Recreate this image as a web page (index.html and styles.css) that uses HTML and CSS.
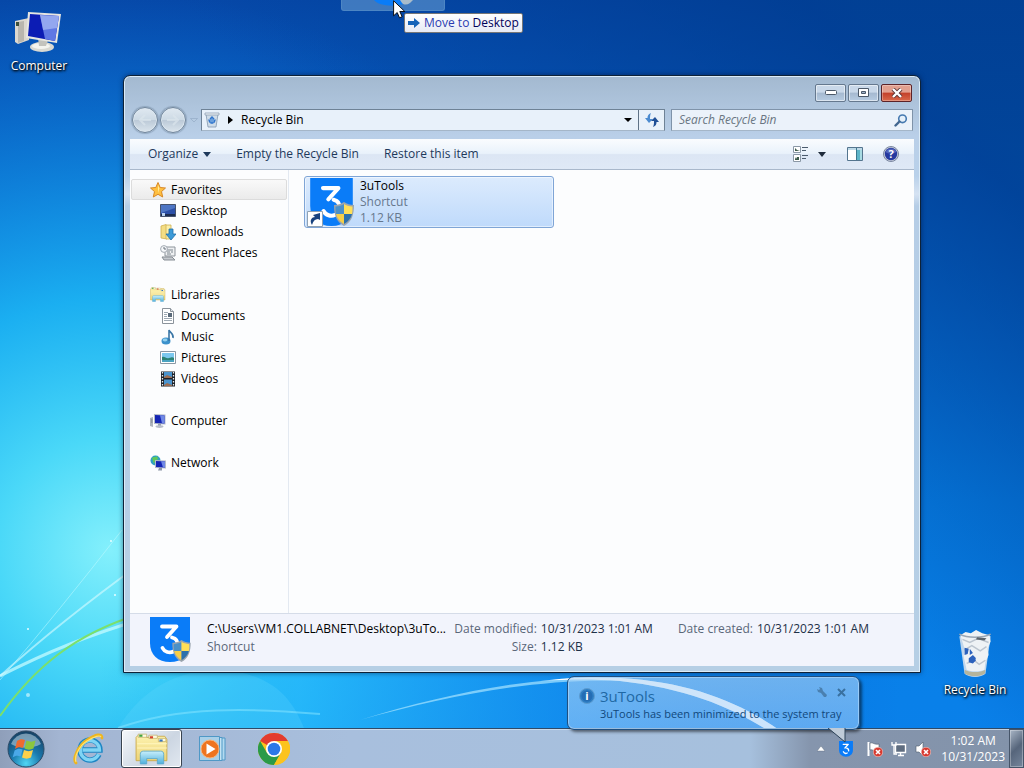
FILE: index.html
```html
<!DOCTYPE html>
<html lang="en">
<head>
    <meta charset="UTF-8">
    <meta name="viewport" content="width=device-width, initial-scale=1.0">
    <title>Recycle Bin</title>
    <link rel="stylesheet" href="styles.css">
</head>
<body>
    <!-- Shared icons -->
    <svg class="sprite" aria-hidden="true">
        <defs>
            <linearGradient id="screen" x1="0" y1="0" x2="1" y2="1">
                <stop offset="0" stop-color="#1a3ad0"/>
                <stop offset="0.4" stop-color="#0a1fb0"/>
                <stop offset="0.45" stop-color="#6f8fe8"/>
                <stop offset="1" stop-color="#3050d8"/>
            </linearGradient>
            <linearGradient id="folder" x1="0" y1="0" x2="0" y2="1">
                <stop offset="0" stop-color="#fdf3b0"/>
                <stop offset="1" stop-color="#ecd377"/>
            </linearGradient>
            <linearGradient id="aqua" x1="0" y1="0" x2="0" y2="1">
                <stop offset="0" stop-color="#c8effc"/>
                <stop offset="1" stop-color="#4fb0dc"/>
            </linearGradient>
        </defs>
        <symbol id="shield" viewBox="0 0 20 24">
            <path d="M10 0c3 2 6 3 10 3c0 9-2 17-10 21C2 20 0 12 0 3c4 0 7-1 10-3z" fill="#9aa4ae"/>
            <path d="M10 2v10H2C1.400 9 1.500 7 1.500 4.500C5 4.300 8 3.500 10 2z" fill="#4a90c8"/>
            <path d="M10 2v10h8c.6-3 .5-5 .5-7.500C15 4.300 12 3.500 10 2z" fill="#ffdf58"/>
            <path d="M10 12v10C5.500 19.500 3 16 2 12z" fill="#f6cf48"/>
            <path d="M10 12v10c4.500-2.500 7-6 8-10z" fill="#2c70ac"/>
        </symbol>
        <symbol id="logo-3u" viewBox="0 0 40 46">
            <path d="M0 0h40v26c0 12-8 19-20 19S0 38 0 26z" fill="#0a7cf8"/>
            <path d="M12 9.500h14.500L17 20" fill="none" stroke="#fff" stroke-width="3.800" stroke-linecap="round" stroke-linejoin="round"/>
            <path d="M22 20.500c4 1 6 4 5.500 8M12.500 31c2 4 7 5.500 11 3.500" fill="none" stroke="#fff" stroke-width="3.800" stroke-linecap="round"/>
        </symbol>
        <symbol id="pc" viewBox="0 0 16 16">
            <path d="M0 5l3-1v10l-3-1z" fill="#aeb4bc"/>
            <path d="M1 7h1.500M1 9h1.500" stroke="#6d757e" stroke-width="0.800"/>
            <path d="M4 1l11.500.5v10l-11.500-.5z" fill="#b3bac8"/>
            <path d="M5 2l9.500.5v8l-9.500-.5z" fill="#1424b4"/>
            <path d="M10 2.300l4.500.2v8l-2.500-.2z" fill="#6f88e6"/>
            <path d="M8 11h3v2H8z" fill="#9aa2ae"/>
            <ellipse cx="9.500" cy="13.600" rx="4" ry="1.300" fill="#b7bdc8"/>
        </symbol>
        <symbol id="bin" viewBox="0 0 36 46">
            <path d="M3 6l5 36c4 4 16 4 20 0l5-36z" fill="#dfe6ee" fill-opacity="0.850"/>
            <path d="M4 5l5-3 5 1 5-3 6 3 7 2 1 6-3 7 1 6-3 7-1 7c-5 2-12 2-17 0l-3-13 1-7z" fill="#eef2f5"/>
            <path d="M6 9l7 3 8-4 10 4M8 19l7-4 8 5 6-4M10 32l7-3 5 4 6-4" fill="none" stroke="#bcc5cf" stroke-width="1.400"/>
            <path d="M3 4c8 4 22 4 30 0" fill="none" stroke="#9aa6b4" stroke-width="1.400"/>
            <path d="M20 7l9 1-2 2-8-1z" fill="#5c646b"/>
            <path d="M8 17l4 1-1 5-3 1zM13 18l3 4-3 2zM12 27l4-3 3 5-3 3-4-1zM16 24l3 3-2 2z" fill="#2c62bd"/>
            <path d="M8 38c5 3 15 3 20 0l-.6 4c-5 3-14 3-19 0z" fill="#b5b49c"/>
        </symbol>
        <symbol id="library" viewBox="0 0 32 30">
            <path d="M1 4l2-2h6l2 2h10l1-1h6l2 3v20H1z" fill="url(#folder)" stroke="#c9a743" stroke-width="0.800"/>
            <path d="M3 1h8v3H3zM13 2h8v3h-8zM22 5h7v3h-7z" fill="#fffbe0" stroke="#b9a55a" stroke-width="0.600"/>
            <path d="M4 1.500h3v2H4z" fill="#3fa33f"/>
            <path d="M14 3h3v2h-3z" fill="#d5442b"/>
            <path d="M23 6h3v2h-3z" fill="#3673bd"/>
            <path d="M2 10h28M2 14h28" stroke="#fff6c0"/>
            <path d="M5 29v-9c0-2 1-3 3-3h16c2 0 3 1 3 3v9h-6v-5H11v5z" fill="url(#aqua)" stroke="#5aa9cf" stroke-width="0.800"/>
        </symbol>
        <symbol id="badge-x" viewBox="0 0 10 10">
            <circle cx="5" cy="5" r="4.800" fill="#d83a30" stroke="#f7d5d0" stroke-width="0.600"/>
            <path d="M3 3l4 4M7 3l-4 4" stroke="#fff" stroke-width="1.600"/>
        </symbol>
    </svg>

    <!-- Wallpaper -->
    <svg class="wallpaper" viewBox="0 0 1024 768" preserveAspectRatio="xMidYMid slice" aria-hidden="true">
        <defs>
            <linearGradient id="sky" x1="0" y1="0" x2="0" y2="1">
                <stop offset="0" stop-color="#0648a8"/>
                <stop offset="0.300" stop-color="#0668cc"/>
                <stop offset="0.650" stop-color="#0680e6"/>
                <stop offset="1" stop-color="#0a80ea"/>
            </linearGradient>
            <radialGradient id="glow" gradientUnits="userSpaceOnUse" cx="110" cy="550" r="560">
                <stop offset="0" stop-color="#84f0fc"/>
                <stop offset="0.200" stop-color="#4ad8f8"/>
                <stop offset="0.450" stop-color="#1db6f4" stop-opacity="0.900"/>
                <stop offset="1" stop-color="#0a70dc" stop-opacity="0"/>
            </radialGradient>
            <linearGradient id="shade" x1="0.400" y1="0.700" x2="1" y2="0.200">
                <stop offset="0.350" stop-color="#003c94" stop-opacity="0"/>
                <stop offset="0.950" stop-color="#003c90" stop-opacity="0.800"/>
                <stop offset="1" stop-color="#003e90" stop-opacity="0.800"/>
            </linearGradient>
            <linearGradient id="floor" x1="0" y1="0" x2="1" y2="0">
                <stop offset="0" stop-color="#18baf4" stop-opacity="0"/>
                <stop offset="0.250" stop-color="#28b8fc"/>
                <stop offset="0.600" stop-color="#1490f0"/>
                <stop offset="1" stop-color="#0464d4" stop-opacity="0"/>
            </linearGradient>
        </defs>
        <rect width="1024" height="768" fill="url(#sky)"/>
        <rect width="1024" height="768" fill="url(#glow)"/>
        <rect width="1024" height="768" fill="url(#shade)"/>
        <rect x="100" y="660" width="800" height="108" fill="url(#floor)" opacity="0.700"/>
        <path d="M118 728c30-50 80-64 120-56s55 30 66 56z" fill="#6fdcff" opacity="0.220"/>
        <path d="M0 676Q70 640 140 620" fill="none" stroke="#c6fbff" stroke-width="3" opacity="0.750"/>
        <path d="M0 676Q60 622 140 564" fill="none" stroke="#d8fcff" stroke-width="2" opacity="0.600"/>
        <path d="M0 680Q60 610 122 530" fill="none" stroke="#c6fbff" opacity="0.500"/>
        <path d="M0 716C34 668 74 634 140 614" fill="none" stroke="#7be06c" stroke-width="2"/>
        <path d="M118 728C180 706 250 708 320 714" fill="none" stroke="#8ce8ff" stroke-width="2" opacity="0.500"/>
        <!-- Light arc that thickens to the right -->
        <path d="M360 720C450 692 540 675 620 678C690 682 740 702 782 732H770C734 708 686 688 620 681C540 678 450 695 360 720z" fill="#a8e4ff" opacity="0.700"/>
        <path d="M540 681C570 677 595 677 620 678C690 682 740 702 782 732H770C734 708 686 688 620 681C595 679 570 679 540 681z" fill="#fff"/>
        <g fill="#e8feff">
            <circle cx="28" cy="629" r="1"/>
            <circle cx="28" cy="695" r="2" opacity="0.600"/>
            <circle cx="115" cy="595" r="1"/>
            <circle cx="111" cy="541" r="1"/>
        </g>
    </svg>

    <main class="desktop">
        <a href="#" class="desktop-icon computer-icon">
            <svg width="48" height="42" viewBox="0 0 48 42" aria-hidden="true">
                <path d="M0 9l14-3v22L3 32l-3-2z" fill="#dcd8cf"/>
                <path d="M3 10l6-1v20l-6 2z" fill="#b9b6ae"/>
                <path d="M1 10h3v4H1z" fill="#3c4f3c"/>
                <ellipse cx="27" cy="35" rx="12" ry="5" fill="#d9d9d2"/>
                <ellipse cx="26" cy="34" rx="9" ry="3" fill="#f4f4ef"/>
                <path d="M23 26l10 2-2 6h-7z" fill="#c3c3bd"/>
                <path d="M13 0l33 2-4 29-31-5z" fill="#e6e6e2"/>
                <path d="M15 2l29 2-4 25-27-5z" fill="#0c1cb4"/>
                <path d="M25 3l19 1-4 25-10-2z" fill="#5f78e4"/>
                <path d="M25 3l19 1-2 12-14 2z" fill="#b5c6f6" opacity="0.600"/>
            </svg>
            <span>Computer</span>
        </a>
        <a href="#" class="desktop-icon bin-icon">
            <svg width="38" height="48" aria-hidden="true"><use href="#bin"/></svg>
            <span>Recycle Bin</span>
        </a>

        <section class="window" aria-label="Recycle Bin">
            <header class="title-bar">
                <button type="button" class="caption-button" aria-label="Minimize">
                    <svg width="12" height="6" viewBox="0 0 12 6"><rect x="0.500" y="0.500" width="11" height="4" rx="1" fill="#fff" stroke="#4b5868"/></svg>
                </button>
                <button type="button" class="caption-button" aria-label="Maximize">
                    <svg width="12" height="10" viewBox="0 0 12 10"><path d="M.5.5h10v8H.5z" fill="#fff" stroke="#4b5868"/><path d="M3.500 3.500h4v2h-4z" fill="#9fb3cb" stroke="#4b5868"/></svg>
                </button>
                <button type="button" class="caption-button close" aria-label="Close">
                    <svg width="12" height="10" viewBox="0 0 12 10"><path d="M2 1l8 8M10 1L2 9" stroke="#5b3434" stroke-width="4"/><path d="M2 1l8 8M10 1L2 9" stroke="#fff" stroke-width="2.400"/></svg>
                </button>
            </header>

            <div class="nav-bar">
                <div class="history">
                    <button type="button" class="round" aria-label="Back"><svg width="16" height="12" viewBox="0 0 16 12"><path d="M8 1L3 6l5 5M3 6h11" fill="none" stroke="#dbe5ed" stroke-width="2" opacity="0.700"/></svg></button>
                    <button type="button" class="round" aria-label="Forward"><svg width="16" height="12" viewBox="0 0 16 12"><path d="M8 1l5 5-5 5M13 6H2" fill="none" stroke="#dbe5ed" stroke-width="2" opacity="0.700"/></svg></button>
                    <button type="button" class="recent" aria-label="Recent pages"><svg width="8" height="5" viewBox="0 0 8 5"><path d="M.5.500h7L4 4z" fill="#b5cbe2" stroke="#93abc6" stroke-width="0.700"/></svg></button>
                </div>
                <div class="address">
                    <svg width="16" height="16" viewBox="0 0 16 16" aria-hidden="true">
                        <path d="M2 2l2 13h8l2-13z" fill="#cfdce8" stroke="#8398ae" stroke-width="0.800"/>
                        <path d="M1 1h14v2H1z" fill="#eef3f7" stroke="#8e9fb2" stroke-width="0.800"/>
                        <path d="M8 5l3 3-1 3H6L5 8z" fill="#6ba0dc" stroke="#2f74cc" stroke-width="1.400" stroke-dasharray="3 1"/>
                    </svg>
                    <svg width="5" height="8" viewBox="0 0 5 8" aria-hidden="true"><path d="M0 0l5 4-5 4z" fill="#000"/></svg>
                    <a href="#" class="crumb">Recycle Bin</a>
                    <button type="button" class="previous" aria-label="Previous locations"><svg width="8" height="4" viewBox="0 0 8 4"><path d="M0 0h8L4 4z" fill="#000"/></svg></button>
                    <button type="button" class="refresh" aria-label="Refresh">
                        <svg width="14" height="14" viewBox="0 0 14 14"><path d="M6 0C3 1 2.500 3 2.500 5H0l4 5 4-4H5C5 4 5 2 6 0z" fill="#4b8bd0"/><path d="M8 14c3-1 3.500-3 3.500-5H14l-4-5-4 4h3c0 2 0 4-1 6z" fill="#1f4f96"/></svg>
                    </button>
                </div>
                <form class="search">
                    <input type="search" placeholder="Search Recycle Bin" aria-label="Search Recycle Bin">
                    <button type="submit" aria-label="Search"><svg width="14" height="13" viewBox="0 0 14 13"><circle cx="8.500" cy="4.800" r="3.800" fill="#e5f0fa" stroke="#4579b0" stroke-width="1.600"/><path d="M5.500 7.500L1.500 11.500" stroke="#41668e" stroke-width="2.400" stroke-linecap="round"/></svg></button>
                </form>
            </div>

            <div class="command-bar">
                <button type="button">Organize <svg width="8" height="5" viewBox="0 0 8 5"><path d="M0 0h8L4 5z" fill="#1e395b"/></svg></button>
                <button type="button">Empty the Recycle Bin</button>
                <button type="button">Restore this item</button>
                <div class="view-tools">
                    <button type="button" aria-label="Change your view">
                        <svg width="16" height="16" viewBox="0 0 16 16"><path d="M.5.500h7v6h-7zM.5 8.500h7v7h-7z" fill="#fff" stroke="#8b98a6"/><path d="M2 5V2l2 2 3 1zM2 14v-3l1 2 1-2 2 0v3z" fill="#3c5a4a"/><path d="M9 1.500h6M9 4.500h4M9 9.500h6M9 12.500h4" stroke="#4b5b6c"/></svg>
                    </button>
                    <button type="button" aria-label="More options"><svg width="8" height="5" viewBox="0 0 8 5"><path d="M0 0h8L4 5z" fill="#1e2b3b"/></svg></button>
                    <button type="button" class="preview" aria-label="Show the preview pane">
                        <svg width="16" height="14" viewBox="0 0 16 14"><path d="M.5.500h15v13H.5z" fill="#fff" stroke="#54758e"/><path d="M1 1h14v2H1z" fill="#bdd9e8"/><path d="M10 3h5v10h-5z" fill="#5eb5c8"/><path d="M9.500 1v12" stroke="#3c788e"/><path d="M13 3h2v10h-2z" fill="#a8dbe3"/></svg>
                    </button>
                    <button type="button" aria-label="Get help">
                        <svg width="16" height="16" viewBox="0 0 16 16"><circle cx="8" cy="8" r="7.500" fill="#c8cfdc" stroke="#7a87a0"/><circle cx="8" cy="8" r="6.200" fill="#26399f"/><path d="M2.500 6a6 6 0 0 1 11 0c-4 2-8 2-11 0z" fill="#7183cf" opacity="0.600"/><text x="8" y="12" class="glyph">?</text></svg>
                    </button>
                </div>
            </div>

            <div class="content">
                <nav class="tree" aria-label="Folders">
                    <ul>
                        <li><a href="#" class="selected">
                            <svg width="16" height="16" viewBox="0 0 16 16"><path d="M8 .5l2.200 5 5.300.5-4 3.600 1.200 5.400L8 12.300 3.300 15l1.200-5.400L.5 6l5.300-.5z" fill="#ffc040" stroke="#d88724"/><path d="M8 3l1.300 3.500L8 11z" fill="#fff0a0"/></svg>
                            Favorites</a>
                            <ul>
                                <li><a href="#"><svg width="16" height="14" viewBox="0 0 16 14"><path d="M.5.500h15v12H.5z" fill="#2c50a8" stroke="#46536c"/><path d="M1 1h14v3L1 9z" fill="#6f9be0" opacity="0.500"/><path d="M1 10h14v2H1z" fill="#1b2c50"/><path d="M2 9h3v3H2z" fill="#b9d2ef"/></svg>Desktop</a></li>
                                <li><a href="#"><svg width="16" height="16" viewBox="0 0 16 16"><path d="M1 2l5-1.500 1 1.500v13l-6-1z" fill="#f3dd84" stroke="#cfb052" stroke-width="0.800"/><path d="M6 1h5v14H6z" fill="#fbefa9" stroke="#cfb052" stroke-width="0.800"/><path d="M9 5h4v5h3l-5 6-5-6h3z" fill="#3b9ad8" stroke="#1f6faa" stroke-width="0.800"/></svg>Downloads</a></li>
                                <li><a href="#"><svg width="16" height="16" viewBox="0 0 16 16"><path d="M5 2h10v9H5z" fill="#eef0f2" stroke="#8d949b"/><path d="M7 5h6M7 7h3M11 7h2M7 9h4" stroke="#7d868e"/><circle cx="4" cy="4" r="3.400" fill="#f6f8fa" stroke="#a3aab2"/><path d="M4 2v2h2" fill="none" stroke="#66707a"/><path d="M2 12h10l3 3H4z" fill="#c6cacf" stroke="#868d94"/></svg>Recent Places</a></li>
                            </ul>
                        </li>
                        <li><a href="#"><svg width="16" height="15"><use href="#library"/></svg>Libraries</a>
                            <ul>
                                <li><a href="#"><svg width="16" height="16" viewBox="0 0 16 16"><path d="M2.500.5h8l3 3v12h-11z" fill="#fff" stroke="#8b939b"/><path d="M10.500.500v3h3" fill="#dfe4e9" stroke="#8b939b"/><path d="M4 4.500h4M4 6.500h3M4 8.500h3M4 10.500h8M4 12.500h8" stroke="#9ea9b3"/><path d="M8 5h4v4H8z" fill="#5a6a7a"/></svg>Documents</a></li>
                                <li><a href="#"><svg width="16" height="16" viewBox="0 0 16 16"><ellipse cx="6" cy="12" rx="4.500" ry="3.500" fill="#3c92cc"/><ellipse cx="5" cy="11" rx="2.400" ry="1.400" fill="#93d0ee"/><path d="M9 12V1c1 3 5 3 4 8" fill="none" stroke="#3a76a6" stroke-width="1.600"/></svg>Music</a></li>
                                <li><a href="#"><svg width="16" height="14" viewBox="0 0 16 14"><path d="M.5.500h15v12H.5z" fill="#fff" stroke="#8b98a4"/><path d="M2 2h12v9H2z" fill="#7cc8ee"/><path d="M2 6c3-1 4 2 7 1s4-1 5 0v4H2z" fill="#2c8374"/><path d="M2 9h12v2H2z" fill="#4aa3c0"/></svg>Pictures</a></li>
                                <li><a href="#"><svg width="16" height="16" viewBox="0 0 16 16"><path d="M1 .5h14v15H1z" fill="#1c2026"/><path d="M2.500 1v14M13.500 1v14" stroke="#e9edf0" stroke-width="1.300" stroke-dasharray="1.500 1.500"/><path d="M4 1h8v6H4zM4 8.500h8V15H4z" fill="#4a94ce"/><path d="M4 6l3-2 5 2v1H4zM4 14l3-2 5 2v1H4z" fill="#9c6d52"/></svg>Videos</a></li>
                            </ul>
                        </li>
                        <li><a href="#"><svg width="16" height="16"><use href="#pc"/></svg>Computer</a></li>
                        <li><a href="#"><svg width="16" height="16" viewBox="0 0 16 16"><circle cx="5.500" cy="5.500" r="5" fill="#2f9fc4"/><path d="M2 3c2-2 3 0 5-2l1 3-3 2-1 3z" fill="#5fc85a"/><path d="M5 5l11 .5v8l-11-.5z" fill="#b3bac8"/><path d="M6 6l9 .5v6l-9-.5z" fill="#1424b4"/><path d="M11 6.300l4 .2v6l-2-.1z" fill="#6f88e6"/><path d="M9 13h3v2.500H8z" fill="#8e98a8"/></svg>Network</a></li>
                    </ul>
                </nav>

                <div class="files">
                    <a href="#" class="file">
                        <span class="thumb">
                            <svg width="43" height="49"><use href="#logo-3u"/></svg>
                            <svg class="thumb-shield" width="20" height="24"><use href="#shield"/></svg>
                            <svg class="thumb-arrow" width="16" height="16" viewBox="0 0 16 16"><path d="M.5.500h15v15H.5z" fill="#fff" stroke="#8fa2b4"/><path d="M5 14c-3-5 0-8 3-8L6 4l7-2v7l-2-1c-3 0-5 2-6 6z" fill="#18427f"/></svg>
                        </span>
                        <span class="file-text">
                            <span class="file-name">3uTools</span>
                            <span>Shortcut</span>
                            <span>1.12 KB</span>
                        </span>
                    </a>
                </div>
            </div>

            <footer class="details">
                <span class="thumb">
                    <svg width="40" height="46"><use href="#logo-3u"/></svg>
                    <svg class="thumb-shield" width="19" height="22"><use href="#shield"/></svg>
                </span>
                <div class="detail-title">
                    <span class="path">C:\Users\VM1.COLLABNET\Desktop\3uTo...</span>
                    <span class="label">Shortcut</span>
                </div>
                <dl>
                    <dt>Date modified:</dt>
                    <dd>10/31/2023 1:01 AM</dd>
                    <dt>Size:</dt>
                    <dd>1.12 KB</dd>
                </dl>
                <dl>
                    <dt>Date created:</dt>
                    <dd>10/31/2023 1:01 AM</dd>
                </dl>
            </footer>
        </section>

        <div class="drag-ghost" aria-hidden="true">
            <svg width="42" height="6" viewBox="0 0 42 6"><path d="M2 0h36c-5 7-30 8-36 0z" fill="#0a7cf8"/><path d="M28 0h13l-3 3c-3 2-6 2-8 0z" fill="#a9bccb"/></svg>
        </div>
        <div class="drag-tip">
            <svg width="12" height="10" viewBox="0 0 12 10" aria-hidden="true"><path d="M0 3h6V0l6 5-6 5V7H0z" fill="#1664b8"/></svg>
            <span>Move to <b>Desktop</b></span>
        </div>
        <svg class="cursor" width="13" height="19" viewBox="0 0 13 19" aria-hidden="true"><path d="M.6.800v15l3.600-3.300 2.300 5.300 2.600-1.100-2.300-5.200h5z" fill="#fff" stroke="#000" stroke-width="0.900"/></svg>

        <aside class="balloon">
            <svg width="16" height="16" viewBox="0 0 16 16" aria-hidden="true"><circle cx="8" cy="8" r="7.500" fill="#2f7fc4" stroke="#5c9bd0"/><circle cx="8" cy="8" r="5.500" fill="#246db4"/><text x="8" y="12" class="glyph">i</text></svg>
            <h2>3uTools</h2>
            <div class="balloon-tools">
                <button type="button" aria-label="Customize"><svg width="11" height="11" viewBox="0 0 11 11"><path d="M2 0l3 1 1 3 4 4-1 2-2 0-3-4-3-1-1-3 2 1 1-1z" fill="#4a80b0"/></svg></button>
                <button type="button" aria-label="Close"><svg width="9" height="9" viewBox="0 0 9 9"><path d="M1 1l7 7M8 1L1 8" stroke="#39709f" stroke-width="2"/></svg></button>
            </div>
            <p>3uTools has been minimized to the system tray</p>
            <svg class="balloon-tail" width="18" height="15" viewBox="0 0 18 15" aria-hidden="true"><path d="M0 0h17v14z" fill="#bfcbd8"/><path d="M0 0l17 14V0" fill="none" stroke="#2c4258"/></svg>
        </aside>
    </main>

    <footer class="taskbar">
        <button type="button" class="start" aria-label="Start">
            <svg width="38" height="38" viewBox="0 0 38 38">
                <defs>
                    <radialGradient id="orb" cx="0.500" cy="0.900" r="0.900">
                        <stop offset="0" stop-color="#4fd6f4"/>
                        <stop offset="0.450" stop-color="#1a79ae"/>
                        <stop offset="1" stop-color="#163f62"/>
                    </radialGradient>
                </defs>
                <circle cx="19" cy="19" r="18" fill="url(#orb)" stroke="#2c4a66"/>
                <path d="M4 14a16 16 0 0 1 30 0c-9 5-21 5-30 0z" fill="#c5d8e6" opacity="0.550"/>
                <path d="M10 11c3-2 5-2 8-1l-2 8c-3-1-5-1-8 1z" fill="#ee6a30"/>
                <path d="M19.500 10.500c3 1.500 6 1.500 9 0l-2 8c-3 1.500-6 1.500-9 0z" fill="#8cc63e"/>
                <path d="M7.600 20.500c3-2 5-2 8-1l-2 7c-3-1-5-1-8 1z" fill="#4aa8e8"/>
                <path d="M17 20c3 1.500 6 1.500 9 0l-2 7.500c-3 1.500-6 1.500-9 0z" fill="#fdd04a"/>
            </svg>
        </button>
        <button type="button" class="task ie" aria-label="Internet Explorer">
            <svg width="32" height="32" viewBox="0 0 32 32">
                <path d="M26 21.500a10 10 0 1 1 1-4.500H9.500" fill="none" stroke="#1c86c4" stroke-width="5.400"/>
                <path d="M25.600 21.300a9.600 9.600 0 1 1 .9-4.300H9.500" fill="none" stroke="#7fd4f4" stroke-width="3.400"/>
                <path d="M3 30C-1 26 5 13 14 7S29 0 29 5" fill="none" stroke="#eeb51e" stroke-width="2.800" stroke-linecap="round"/>
                <path d="M3 29C1 24 6 13 14 8s13-6 14-4" fill="none" stroke="#ffe371" stroke-width="1.200"/>
            </svg>
        </button>
        <button type="button" class="task active" aria-label="Windows Explorer">
            <svg width="34" height="32"><use href="#library"/></svg>
        </button>
        <button type="button" class="task" aria-label="Windows Media Player">
            <svg width="28" height="26" viewBox="0 0 28 26">
                <path d="M8 2h18v22H8z" fill="#b3daf0" stroke="#4f98c6"/>
                <path d="M5 1.500h18v23H5z" fill="#c4e4f4" stroke="#4f98c6"/>
                <path d="M.5.500h20v24H.5z" fill="#a9d0e8" stroke="#4f98c6"/>
                <circle cx="11" cy="13" r="9" fill="#ee741f" stroke="#f8b47a"/>
                <path d="M7.500 7.500l9 5.500-9 5.500z" fill="#fff"/>
            </svg>
        </button>
        <button type="button" class="task" aria-label="Google Chrome">
            <svg width="32" height="32" viewBox="0 0 32 32">
                <circle cx="16" cy="16" r="16" fill="#fcc31e"/>
                <path d="M16 16L2.140 8A16 16 0 0 1 29.860 8H16z" fill="#e33b2e"/>
                <path d="M16 32A16 16 0 0 1 2.140 8l6.900 12L16 24l6.900-4z" fill="#2a9a48"/>
                <path d="M16 8h13.860A16 16 0 0 1 16 32l6.900-12z" fill="#fcc31e"/>
                <circle cx="16" cy="16" r="8" fill="#fff"/>
                <circle cx="16" cy="16" r="6.300" fill="#2c78e8"/>
            </svg>
        </button>

        <div class="tray">
            <button type="button" aria-label="Show hidden icons"><svg width="8" height="6" viewBox="0 0 8 6"><path d="M4 0l4 5H0z" fill="#fff" stroke="#56647a" stroke-width="0.400"/></svg></button>
            <button type="button" aria-label="3uTools"><svg width="14" height="16"><use href="#logo-3u"/></svg></button>
            <button type="button" aria-label="Action Center"><svg width="16" height="16" viewBox="0 0 16 16"><path d="M1.500 1v14" stroke="#fff" stroke-width="2"/><path d="M3 2c3-1 4 2 9 1v7c-5 1-6-2-9-1z" fill="#fff" stroke="#4d5a6c" stroke-width="0.600"/><use href="#badge-x" x="6" y="6" width="10" height="10"/></svg></button>
            <button type="button" aria-label="Network"><svg width="16" height="16" viewBox="0 0 16 16"><path d="M4.500 3.500h10v8h-10z" fill="#5f6d80" stroke="#fff" stroke-width="1.400"/><path d="M7 14.500h6M9.500 12v2" stroke="#fff" stroke-width="1.400"/><path d="M1 1v3h4V1M3 4v9h3" fill="none" stroke="#fff" stroke-width="1.300"/></svg></button>
            <button type="button" aria-label="Volume muted"><svg width="16" height="16" viewBox="0 0 16 16"><path d="M1 5h3l4-4v14l-4-4H1z" fill="#fff" stroke="#4d5a6c" stroke-width="0.600"/><use href="#badge-x" x="6" y="6" width="10" height="10"/></svg></button>
            <time class="clock" datetime="2023-10-31T01:02"><span>1:02 AM</span><span>10/31/2023</span></time>
            <button type="button" class="show-desktop" aria-label="Show desktop"></button>
        </div>
    </footer>
</body>
</html>
```

FILE: styles.css
```css
* {
    box-sizing: border-box;
}

body {
    font-family: "Open Sans", "Noto Sans", sans-serif;
    font-size: 12px;
    line-height: 16px;
    margin: 0;
    height: 100vh;
    display: flex;
    flex-direction: column;
    overflow: hidden;
    background-color: #0678dc;
    color: #000;
}

button {
    font: inherit;
    color: inherit;
    background: none;
    border: none;
    margin: 0;
    padding: 0;
    display: flex;
    align-items: center;
    justify-content: center;
}

a {
    color: inherit;
    text-decoration: none;
}

svg {
    display: block;
    flex: none;
}

ul, dl, dd, p, h2 {
    margin: 0;
    padding: 0;
    list-style: none;
}

.sprite {
    position: absolute;
    width: 0;
    height: 0;
}

.wallpaper {
    position: absolute;
    width: 100%;
    height: 100%;
    z-index: -1;
}

.glyph {
    font-size: 11px;
    font-weight: bold;
    fill: #fff;
    text-anchor: middle;
}

.desktop {
    flex: 1;
    position: relative;
    min-height: 0;
}

/* Desktop shortcuts */
.desktop-icon {
    position: absolute;
    width: 76px;
    display: flex;
    flex-direction: column;
    align-items: center;
    gap: 4px;
    color: #fff;
    text-shadow: 1px 1px 2px #000, 0 1px 3px #000;
}

.computer-icon {
    top: 12px;
    left: 1px;
}

.bin-icon {
    right: 11px;
    bottom: 30px;
}

/* Explorer window */
.window {
    position: absolute;
    top: 75px;
    right: 103px;
    bottom: 55px;
    left: 123px;
    display: flex;
    flex-direction: column;
    padding: 0 6px 6px;
    border: 1px solid #0e2238;
    border-radius: 7px 7px 0 0;
    background: linear-gradient(#a3b9d0, #b9cfe8 60px, #b9d1ea 100px, #d5e2f2 118px, #b5cde6 130px, #b6cfe5);
    box-shadow: inset 0 0 0 1px #dcecf8, 0 0 5px rgba(0, 10, 40, 0.5);
}

.title-bar {
    display: flex;
    justify-content: flex-end;
    gap: 2px;
    height: 33px;
    padding: 8px 2px 7px;
}

.caption-button {
    width: 31px;
    border: 1px solid #65788e;
    border-radius: 2px;
    background: linear-gradient(#c9d8e9 45%, #a5b9d0 50%, #b7cce2);
    box-shadow: inset 0 0 0 1px rgba(255, 255, 255, 0.5);
}

.caption-button.close {
    border-color: #5c2328;
    background: linear-gradient(#e2a08f 45%, #c3402a 50%, #d9694b);
    box-shadow: inset 0 0 0 1px rgba(255, 255, 255, 0.3);
}

.nav-bar {
    display: flex;
    align-items: center;
    height: 30px;
    padding: 0 1px 8px 2px;
}

.history {
    display: flex;
    align-items: center;
    gap: 2px;
    width: 69px;
}

.round {
    width: 26px;
    height: 26px;
    border: 1px solid #72869b;
    border-radius: 50%;
    background: linear-gradient(#e0e9f1, #cddae5 48%, #bccad8 52%, #dbe5ed);
    box-shadow: inset 0 0 0 1px #dce7f0, 0 0 1px 1px rgba(96, 117, 140, 0.4);
}

.recent {
    margin-left: 2px;
}

.address {
    flex: 1 1 464px;
    display: flex;
    align-items: center;
    gap: 8px;
    height: 22px;
    padding-left: 2px;
    border: 1px solid #6e8296;
    border-bottom-color: #a4b6c8;
    background-color: #e8f1fa;
}

.crumb {
    flex: 1;
}

.previous {
    height: 20px;
}

.refresh {
    width: 26px;
    height: 20px;
    margin-left: -2px;
    border-left: 1px solid #5f7286;
}

.search {
    flex: 1 1 242px;
    display: flex;
    align-items: center;
    height: 22px;
    margin-left: 6px;
    padding: 0 4px 0 7px;
    border: 1px solid #7f93a9;
    border-bottom-color: #a4b6c8;
    background-color: #ebf2fa;
}

.search input {
    flex: 1;
    min-width: 0;
    padding: 0;
    border: none;
    outline: none;
    background: none;
    font: inherit;
    font-style: italic;
}

.search input::placeholder {
    color: #6a7682;
}

.command-bar {
    display: flex;
    align-items: center;
    gap: 25px;
    height: 31px;
    padding: 0 15px 0 18px;
    border-bottom: 1px solid #a9b8cb;
    background: linear-gradient(#fafcfe, #e9f2fb 48%, #dce6f4 52%, #dfe9f6);
    color: #1e395b;
}

.command-bar button {
    gap: 5px;
}

.view-tools {
    display: flex;
    align-items: center;
    gap: 9px;
    margin-left: auto;
}

.view-tools .preview {
    margin: 0 11px 0 12px;
}

.content {
    flex: 1;
    display: flex;
    min-height: 0;
    background-color: #fcfdfe;
}

/* Folder tree */
.tree {
    width: 159px;
    padding: 9px 1px;
    border-right: 1px solid #e3e9f1;
}

.tree > ul {
    display: flex;
    flex-direction: column;
    gap: 21px;
}

.tree a {
    display: flex;
    align-items: center;
    gap: 5px;
    height: 21px;
    padding-left: 18px;
    border: 1px solid transparent;
    border-radius: 2px;
}

.tree ul ul a {
    padding-left: 28px;
}

.tree a.selected {
    border-color: #dcdcdc;
    background: linear-gradient(#f9f9f9, #ebebeb);
}

.files {
    flex: 1;
    padding: 6px 15px;
}

.file {
    display: flex;
    gap: 7px;
    width: 250px;
    height: 52px;
    padding: 1px 5px;
    border: 1px solid #7fa5d6;
    border-radius: 3px;
    background: linear-gradient(#dcebfd, #bfdafb);
    box-shadow: inset 0 0 0 1px rgba(255, 255, 255, 0.5);
}

.file-text {
    display: flex;
    flex-direction: column;
    color: #66788e;
}

.file-name {
    color: #000;
}

.thumb {
    position: relative;
    align-self: flex-start;
}

.thumb-shield {
    position: absolute;
    right: -1px;
    bottom: 1px;
}

.thumb-arrow {
    position: absolute;
    left: -3px;
    bottom: 0;
}

/* Details pane */
.details {
    display: flex;
    height: 53px;
    padding: 3px 20px;
    border-top: 1px solid #d5dce8;
    background-color: #f2f4fc;
    color: #1e3048;
    line-height: 18px;
}

.detail-title {
    display: flex;
    flex-direction: column;
    width: 246px;
    margin: 3px 2px 0 17px;
}

.path {
    white-space: nowrap;
    color: #000;
}

.details dl {
    display: grid;
    grid-template-columns: auto auto;
    align-content: start;
    column-gap: 4px;
    margin: 3px 25px 0 0;
    white-space: nowrap;
}

.label, .details dt {
    color: #5a6779;
}

.details dt {
    text-align: right;
}

/* Dragged item */
.drag-ghost {
    position: absolute;
    top: 0;
    left: 341px;
    width: 104px;
    height: 11px;
    display: flex;
    justify-content: center;
    border: 1px solid #4d86c4;
    border-top: none;
    border-radius: 0 0 3px 3px;
    background-color: rgba(100, 155, 210, 0.6);
}

.drag-tip {
    position: absolute;
    top: 13px;
    left: 404px;
    display: flex;
    align-items: center;
    gap: 4px;
    height: 20px;
    padding: 0 3px;
    border: 1px solid #767676;
    border-radius: 2px;
    background: linear-gradient(#fff, #e6eaf5);
    color: #2a3cb0;
    white-space: nowrap;
}

.drag-tip b {
    color: #00005a;
    font-weight: normal;
}

.cursor {
    position: absolute;
    top: 0;
    left: 393px;
}

/* Tray balloon */
.balloon {
    position: absolute;
    right: 164px;
    bottom: -2px;
    z-index: 1;
    width: 293px;
    height: 54px;
    display: grid;
    grid-template-columns: 16px 1fr auto;
    grid-template-rows: 20px 16px;
    column-gap: 5px;
    align-items: center;
    padding: 9px 10px 7px 11px;
    border: 1px solid #1f4f80;
    border-radius: 7px;
    background: linear-gradient(rgba(175, 212, 245, 0.6), rgba(160, 205, 250, 0.55));
    box-shadow: inset 0 0 0 1px rgba(200, 230, 255, 0.5), 2px 2px 3px rgba(0, 0, 0, 0.5);
    color: #10487c;
}

.balloon h2 {
    font-size: 15px;
    line-height: 20px;
    font-weight: normal;
    color: #1f68a4;
}

.balloon p {
    grid-column: 2 / 4;
    font-size: 11px;
    white-space: nowrap;
}

.balloon-tools {
    display: flex;
    align-self: start;
    align-items: center;
    gap: 9px;
    padding: 1px 3px;
}

.balloon-tail {
    position: absolute;
    right: 13px;
    top: 51px;
}

/* Taskbar */
.taskbar {
    display: flex;
    height: 40px;
    padding-left: 7px;
    border-top: 1px solid #2f4a68;
    background: linear-gradient(90deg, #8f9fba, #a3b5d2 60px, #a8bfdd 350px, #a6c0dd 750px, #8595ad 810px, #8393aa);
    box-shadow: inset 0 1px 0 rgba(210, 225, 240, 0.8);
}

.start {
    width: 53px;
    justify-content: flex-start;
}

.task {
    width: 61px;
    border: 1px solid transparent;
}

.task.ie {
    padding-right: 4px;
}

.task.active {
    border-color: #38434f;
    border-radius: 3px;
    background: linear-gradient(135deg, #f4f7fa, #ccd6e2 60%, #e2e8f0);
    box-shadow: inset 0 0 0 1px #fff;
}

.tray {
    display: flex;
    align-items: center;
    gap: 8px;
    margin-left: auto;
    color: #fff;
}

.tray button:nth-child(-n+2) {
    margin-right: 6px;
}

.clock {
    display: flex;
    flex-direction: column;
    align-items: center;
    margin: 0 -4px 0 2px;
}

.show-desktop {
    align-self: stretch;
    width: 15px;
    border: 1px solid #465569;
    background: linear-gradient(135deg, #a9b6c6, #56657b 50%, #76869c);
    box-shadow: inset 0 0 0 1px rgba(255, 255, 255, 0.3);
}
```
